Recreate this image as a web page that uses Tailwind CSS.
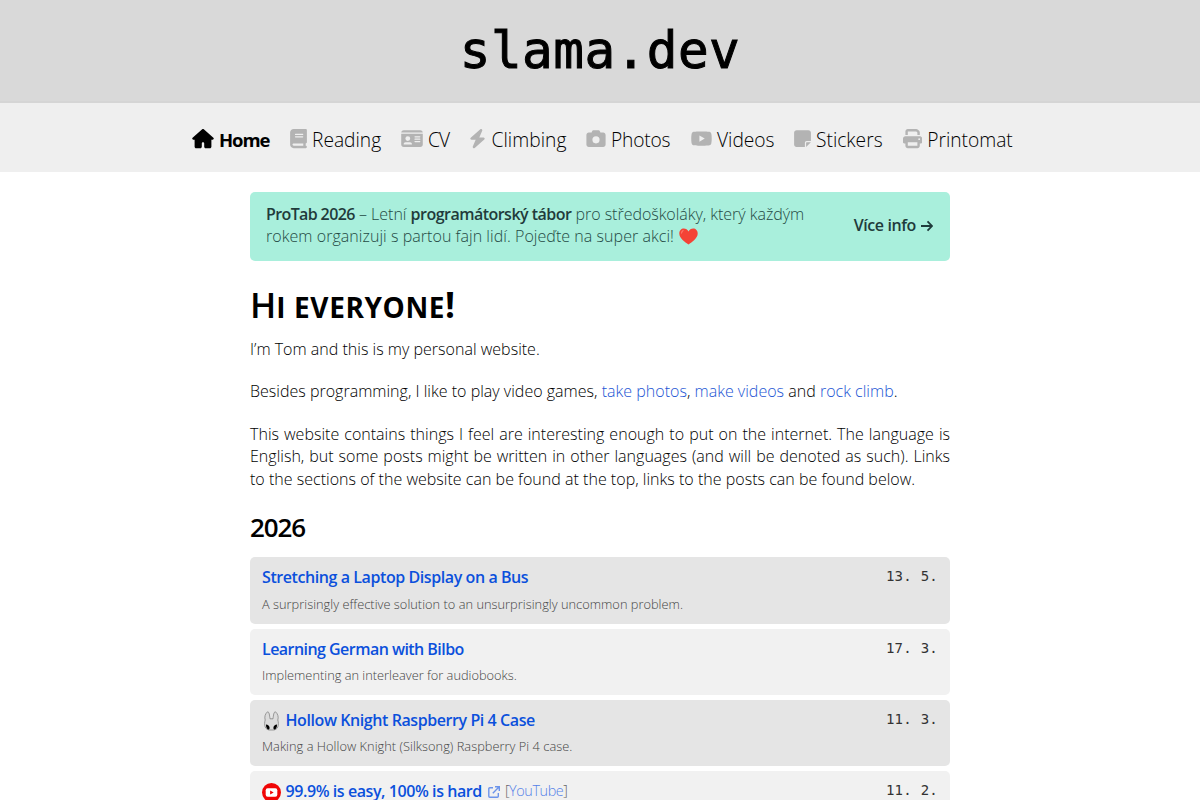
<!DOCTYPE html>
<html lang="en">
<head>
    <meta charset="UTF-8">
    <meta name="viewport" content="width=device-width, initial-scale=1.0">
    <title>slama.dev</title>
    <script src="https://cdn.jsdelivr.net/npm/@tailwindcss/browser@4"></script>
</head>
<body class="bg-white text-black font-['Open_Sans','Noto_Sans',sans-serif] font-light text-[16px] h-[800px] overflow-hidden">
    <header class="h-[102.5px] bg-[#d9d9d9] border-b-2 border-[#d5d5d5] flex justify-center">
        <h1 class="font-['DejaVu_Sans_Mono',monospace] text-[51px] leading-[102px] tracking-[0.45px] [-webkit-text-stroke:1px_black]">slama.dev</h1>
    </header>

    <nav class="h-[69.5px] bg-[#efefef] pl-[192px]">
        <ul class="grid grid-cols-[98px_111px_69px_116px_105px_103px_109px_112px] h-[73px] items-center text-[19.2px] whitespace-nowrap">
            <li class="flex items-center">
                <svg class="w-[22px] h-[19.2px] mr-[5px]" viewBox="0 0 576 512"><path d="M575.8 255.500c0 18-15 32.100-32 32.100h-32l.7 160.200c0 2.700-.2 5.400-.5 8.100V472c0 22.100-17.900 40-40 40H360c-22.100 0-40-17.900-40-40v-88c0-17.700-14.300-32-32-32s-32 14.300-32 32v88c0 22.100-17.900 40-40 40H104c-22.100 0-40-17.900-40-40V287.600H32c-18 0-32-14-32-32.100 0-9 3-17 10-24L266.400 8c7-7 15-8 22-8s15 2 21 7l255.400 224.500c8 7 12 15 11 24z"/></svg>
                <a class="font-bold text-[18.5px] tracking-[-1.1px] pt-[2px]">Home</a>
            </li>
            <li class="flex items-center">
                <svg class="w-[17px] h-[19.2px] mr-[5px]" viewBox="0 0 448 512" fill="#b3b3b3"><path fill-rule="evenodd" d="M96 0C43 0 0 43 0 96v320c0 53 43 96 96 96h320c17.700 0 32-14.300 32-32s-14.300-32-32-32v-64c17.700 0 32-14.300 32-32V32c0-17.700-14.300-32-32-32H96zm0 384h256v64H96c-17.700 0-32-14.300-32-32s14.300-32 32-32zm32-240c0-8.800 7.200-16 16-16h192c8.800 0 16 7.200 16 16s-7.200 16-16 16H144c-8.800 0-16-7.200-16-16zm16 48h192c8.800 0 16 7.200 16 16s-7.200 16-16 16H144c-8.800 0-16-7.200-16-16s7.200-16 16-16z"/></svg>
                <a class="pt-[2px]">Reading</a>
            </li>
            <li class="flex items-center">
                <svg class="w-[22px] h-[19.2px] mr-[5px]" viewBox="0 0 576 512" fill="#b3b3b3"><path fill-rule="evenodd" d="M0 96h576c0-35.300-28.700-64-64-64H64C28.700 32 0 60.700 0 96zm0 32v288c0 35.300 28.700 64 64 64h448c35.300 0 64-28.700 64-64V128H0zm64 277.300c0-29.400 23.900-53.300 53.300-53.300h117.400c29.400 0 53.300 23.900 53.300 53.300 0 5.900-4.800 10.700-10.700 10.700H74.700c-5.900 0-10.700-4.800-10.700-10.700zM176 192a64 64 0 1 1 0 128 64 64 0 1 1 0-128zm176 16c0-8.800 7.200-16 16-16h128c8.800 0 16 7.200 16 16s-7.200 16-16 16H368c-8.800 0-16-7.200-16-16zm0 64c0-8.800 7.200-16 16-16h128c8.800 0 16 7.200 16 16s-7.200 16-16 16H368c-8.800 0-16-7.200-16-16zm0 64c0-8.800 7.200-16 16-16h128c8.800 0 16 7.200 16 16s-7.200 16-16 16H368c-8.800 0-16-7.200-16-16z"/></svg>
                <a class="pt-[2px] tracking-[-0.8px]">CV</a>
            </li>
            <li class="flex items-center">
                <svg class="w-[17px] h-[19.2px] -ml-px mr-[5.5px]" viewBox="0 0 448 512" fill="#b3b3b3"><path d="M349.400 44.600c5.900-13.700 1.500-29.700-10.600-38.500s-28.600-8-39.900 1.800l-256 224c-10 8.800-13.600 22.900-8.900 35.300S50.700 288 64 288h111.500L98.600 467.400c-5.900 13.700-1.500 29.700 10.600 38.500s28.600 8 39.900-1.800l256-224c10-8.800 13.600-22.900 8.900-35.300s-16.600-20.700-30-20.700H272.500L349.400 44.600z"/></svg>
                <a class="pt-[2px] tracking-[0.05px]">Climbing</a>
            </li>
            <li class="flex items-center">
                <svg class="w-[20px] h-[19.2px] mr-[5px]" viewBox="0 0 512 512" fill="#b3b3b3"><path fill-rule="evenodd" d="M149.100 64.800L138.700 96H64C28.700 96 0 124.700 0 160v256c0 35.300 28.700 64 64 64h384c35.300 0 64-28.700 64-64V160c0-35.300-28.700-64-64-64h-74.700l-10.400-31.200C356.400 45.200 338.100 32 317.400 32H194.600c-20.700 0-39 13.200-45.500 32.800zM256 192a96 96 0 1 1 0 192 96 96 0 1 1 0-192z"/></svg>
                <a class="pt-[2px] tracking-[-0.2px]">Photos</a>
            </li>
            <li class="flex items-center">
                <svg class="w-[21px] h-[19.2px] mr-[5px]" viewBox="14 0 548 512" fill="#b3b3b3"><path fill-rule="evenodd" d="M549.700 124.100c-6.300-23.700-24.800-42.300-48.300-48.600C458.800 64 288 64 288 64S117.200 64 74.600 75.500c-23.500 6.300-42 24.900-48.300 48.600C14.900 167 14.900 256.400 14.900 256.400s0 89.400 11.400 132.300c6.300 23.700 24.800 41.500 48.300 47.800C117.200 448 288 448 288 448s170.800 0 213.400-11.500c23.500-6.300 42-24.200 48.300-47.800 11.400-42.900 11.400-132.300 11.400-132.300s0-89.400-11.400-132.300zM232.200 337.600V175.200l142.700 81.200-142.700 81.200z"/></svg>
                <a class="pt-[2px]">Videos</a>
            </li>
            <li class="flex items-center">
                <svg class="w-[17px] h-[19.2px] mr-[5px]" viewBox="0 0 448 512" fill="#b3b3b3"><path d="M288 480H64c-35.300 0-64-28.700-64-64V96c0-35.300 28.700-64 64-64h320c35.300 0 64 28.700 64 64v224H336c-26.500 0-48 21.500-48 48v112zm32 0V368c0-8.800 7.200-16 16-16h112L320 480z"/></svg>
                <a class="pt-[2px]">Stickers</a>
            </li>
            <li class="flex items-center">
                <svg class="w-[19.2px] h-[19.2px] mr-[5px]" viewBox="0 0 512 512" fill="#b3b3b3"><path fill-rule="evenodd" d="M128 0C92.700 0 64 28.700 64 64v96h64V64h226.700L384 93.300V160h64V93.300c0-17-6.700-33.300-18.700-45.300L400 18.700C388 6.700 371.700 0 354.700 0H128zm256 352v96H128v-96h256zm64 32h32c17.700 0 32-14.300 32-32v-96c0-35.300-28.700-64-64-64H64c-35.300 0-64 28.700-64 64v96c0 17.700 14.300 32 32 32h32v64c0 35.300 28.700 64 64 64h256c35.300 0 64-28.700 64-64v-64zM432 248a24 24 0 1 1 0 48 24 24 0 1 1 0-48z"/></svg>
                <a class="pt-[2px]">Printomat</a>
            </li>
        </ul>
    </nav>

    <main class="w-[700px] mx-auto pt-[20px]">
        <div class="h-[69px] rounded-[5px] bg-[#a9efdc] text-[#244a44] flex items-center justify-between pl-4 pr-[17px]">
            <p class="leading-[22.4px] whitespace-nowrap pb-[3px]">
                <span class="block"><b class="font-semibold tracking-[-0.62px] text-[#1f3b3b]">ProTab 2026</b> – Letní <b class="font-semibold tracking-[-0.52px] text-[#1f3b3b]">programátorský tábor</b> <span class="tracking-[-0.03px]">pro středoškoláky, který každým</span></span>
                <span class="flex items-center h-[22px]"><span class="tracking-[0.05px]">rokem organizuji s partou fajn lidí. Pojeďte na super akci!</span>
                <svg class="w-[19px] h-[17px] ml-[5px]" viewBox="0 0 19 17"><path fill="#f44336" d="M9.500 16.500C6 14 .5 10.500.3 5.700.2 2.500 2.300.5 4.800.5c2.100 0 3.800 1.200 4.700 3 .9-1.800 2.600-3 4.700-3 2.500 0 4.600 2 4.500 5.200-.2 4.800-5.700 8.300-9.200 10.800z"/><path fill="#ff7568" d="M2 5.500c0-2 1-3.500 2.500-3.500.8.600-.8 1.300-1.200 2.600-.3.900-1.100 1.700-1.300.9z"/></svg></span>
            </p>
            <a class="font-semibold tracking-[-0.4px] text-[#1f3b3b] flex items-center whitespace-nowrap pb-[3px]">Více info
                <svg class="w-[12px] h-[12px] ml-[5px] mt-[2px]" viewBox="0 0 12 12" fill="none" stroke="#1f3b3b" stroke-width="1.8"><path d="M0 6h11M6.500 1.300L11 6l-4.500 4.700"/></svg>
            </a>
        </div>

        <h2 class="mt-[20px] h-[48px] leading-[48px] font-bold text-[35px] whitespace-nowrap"><span class="font-semibold">H</span><span class="text-[28px] uppercase tracking-[0.6px]">i everyone</span><span>!</span></h2>

        <p class="mt-[9px] leading-[22.4px] tracking-[0.015px]">I’m Tom and this is my personal website.</p>
        <p class="mt-[20px] leading-[22.4px] tracking-[0.015px]">Besides programming, I like to play video games, <a class="text-[#1c55d4]">take photos</a>, <a class="text-[#1c55d4]">make videos</a> and <a class="text-[#1c55d4]">rock climb</a>.</p>
        <div class="mt-[20px] leading-[22.4px] whitespace-nowrap tracking-[0.02px]">
            <p class="[text-align-last:justify]">This website contains things I feel are interesting enough to put on the internet. The language is</p>
            <p class="[text-align-last:justify]">English, but some posts might be written in other languages (and will be denoted as such). Links</p>
            <p>to the sections of the website can be found at the top, links to the posts can be found below.</p>
        </div>

        <h3 class="mt-[19px] leading-[36px] text-[26px] font-semibold tracking-[-1.1px]">2026</h3>

        <ul class="mt-[12.4px] flex flex-col gap-[5px]">
            <li class="h-[66.3px] shrink-0 rounded-[5px] bg-[#e5e5e5] px-3 pt-[9px]">
                <div class="flex justify-between leading-[22.4px]">
                    <a class="font-semibold text-[#0b50dc] tracking-[-0.42px]">Stretching a Laptop Display on a Bus</a>
                    <span class="font-['DejaVu_Sans_Mono',monospace] text-[14px] text-[#333] tracking-[0.25px] leading-[20px]">13. 5.</span>
                </div>
                <p class="text-[12.8px] leading-[18px] mt-[6.4px] text-[#444] tracking-[0.02px]">A surprisingly effective solution to an unsurprisingly uncommon problem.</p>
            </li>
            <li class="h-[66.3px] shrink-0 rounded-[5px] bg-[#f1f1f1] px-3 pt-[9px]">
                <div class="flex justify-between leading-[22.4px]">
                    <a class="font-semibold text-[#0b50dc] tracking-[-0.54px]">Learning German with Bilbo</a>
                    <span class="font-['DejaVu_Sans_Mono',monospace] text-[14px] text-[#333] tracking-[0.25px] leading-[20px]">17. 3.</span>
                </div>
                <p class="text-[12.8px] leading-[18px] mt-[6px] text-[#444]">Implementing an interleaver for audiobooks.</p>
            </li>
            <li class="h-[66.3px] shrink-0 rounded-[5px] bg-[#e5e5e5] px-3 pt-[9px]">
                <div class="flex justify-between leading-[22.4px]">
                    <div class="flex items-center">
                        <svg class="w-[19px] h-[20px] mr-[4.5px] mt-[2px]" viewBox="0 0 19 20"><path fill="#dcdcdc" stroke="#777" stroke-width=".7" d="M5.500.8C3 3 2.300 6 3.200 9 2.500 11 2.400 14 3.200 16c.8 2 2.500 2.800 4 3h4.600c1.500-.2 3.200-1 4-3 .8-2 .7-5 0-7 .9-3 .2-6-2.300-8.200-1.800 0-2 3.500-2.500 7H8C7.500 4.300 7.300.8 5.500.8z"/><path fill="#000" d="M4 13.500c1.900 0 3.600 1.300 3.600 3.200 0 1.200-.5 1.900-1.200 1.900C4.900 18 3.900 16.300 4 13.500zm11 0c-1.900 0-3.600 1.300-3.600 3.200 0 1.200.5 1.900 1.200 1.900 1.500-.6 2.500-2.300 2.400-5.100z"/></svg>
                        <a class="font-semibold text-[#0b50dc] tracking-[-0.42px]">Hollow Knight Raspberry Pi 4 Case</a>
                    </div>
                    <span class="font-['DejaVu_Sans_Mono',monospace] text-[14px] text-[#333] tracking-[0.25px] leading-[20px]">11. 3.</span>
                </div>
                <p class="text-[12.8px] leading-[18px] mt-[6px] text-[#444] tracking-[0.03px]">Making a Hollow Knight (Silksong) Raspberry Pi 4 case.</p>
            </li>
            <li class="h-[66.3px] shrink-0 rounded-[5px] bg-[#f1f1f1] px-3 pt-[9px]">
                <div class="flex justify-between leading-[22.4px]">
                    <div class="flex items-center">
                        <svg class="w-[19px] h-[19px] mr-[4.5px] mt-[2px]" viewBox="0 0 19 19"><circle cx="9.500" cy="9.500" r="9.500" fill="#f00505"/><rect x="3.700" y="5.300" width="11.600" height="8.400" rx="2" fill="#fff"/><path fill="#f00505" d="M8.100 7.400v4.200l3.600-2.100z"/></svg>
                        <a class="font-semibold text-[#0b50dc] tracking-[-0.42px]">99.9% is easy, 100% is hard</a>
                        <svg class="w-[12px] h-[12px] ml-[6px] mr-[5px]" viewBox="0 0 12 12" fill="none" stroke="#6c94ea" stroke-width="1.4"><path d="M5 1.700H1.800a1 1 0 0 0-1 1v7.500a1 1 0 0 0 1 1h7.500a1 1 0 0 0 1-1V7M7 .7h4.300V5M11.200.8L4.800 7.200"/></svg>
                        <span class="text-[14.4px] text-[#666] tracking-[-0.4px]">[<span class="text-[#5582e8]">YouTube</span>]</span>
                    </div>
                    <span class="font-['DejaVu_Sans_Mono',monospace] text-[14px] text-[#333] tracking-[0.25px] leading-[20px]">11. 2.</span>
                </div>
            </li>
        </ul>
    </main>
</body>
</html>
